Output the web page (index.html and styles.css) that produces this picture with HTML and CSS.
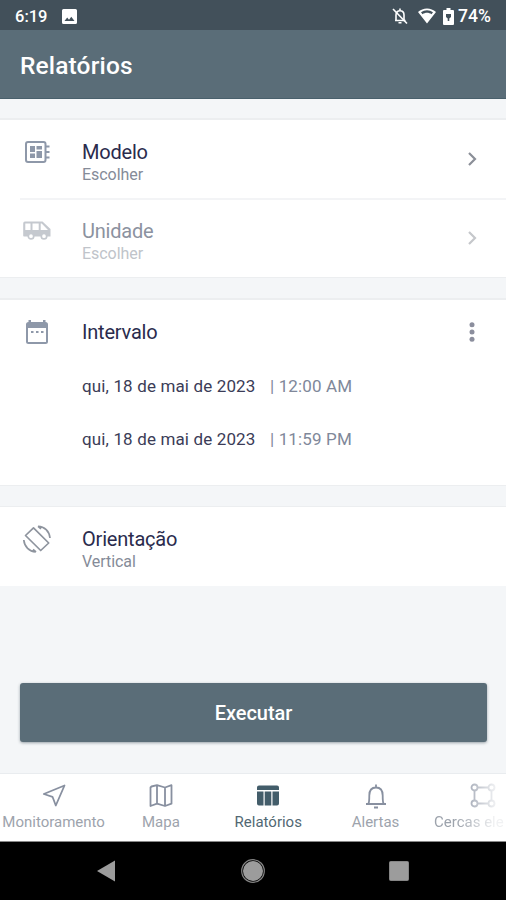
FILE: index.html
```html
<!DOCTYPE html>
<html lang="pt-BR">
<head>
<meta charset="utf-8">
<title>Relatórios</title>
<link rel="stylesheet" href="styles.css">
</head>
<body>
<div class="app">
  <div class="status">
    <span class="clock">6:19</span>
    <svg class="photo" width="15" height="15" viewBox="0 0 15 15"><path fill="#fff" fill-rule="evenodd" d="M1.500 0h12A1.500 1.500 0 0 1 15 1.500v12a1.500 1.500 0 0 1-1.500 1.500h-12A1.500 1.500 0 0 1 0 13.500v-12A1.500 1.500 0 0 1 1.500 0zM2.500 12h10L9.300 7.800 7 10.700 5.200 8.600z"/></svg>
    <svg class="mute" width="18" height="18" viewBox="0 0 18 18" fill="none" stroke="#fff" stroke-width="1.600"><path d="M4 13.500h10.500M5 13V8c0-2.600 1.600-4.300 4-4.300s4 1.700 4 4.300v5M9 1.500v2M7.500 15.800h3"/><path d="M2 2l14 14.500"/></svg>
    <svg class="wifi" width="18" height="16" viewBox="0 0 18 16"><path fill="#fff" fill-rule="evenodd" d="M0 4C5-.8 13-.8 18 4L9 15.500zM3 4.300l1.500 1.900c2.700-2 6.300-2 9 0L15 4.300c-3.600-2.700-8.400-2.700-12 0z"/></svg>
    <svg class="battery" width="11" height="17" viewBox="0 0 11 17"><path fill="#fff" d="M3.500 0h4v2H10a1 1 0 0 1 1 1v13a1 1 0 0 1-1 1H1a1 1 0 0 1-1-1V3a1 1 0 0 1 1-1h2.500z"/><path fill="#42505a" d="M3 6h5v3L6.300 10.500V13H4.700v-2.500L3 9z"/></svg>
    <span class="percent">74%</span>
  </div>
  <header class="bar"><h1>Relatórios</h1></header>
  <main class="content">
    <section class="card">
      <div class="row model">
        <svg class="icon" width="30" height="30" viewBox="0 0 30 30"><rect x="4" y="5" width="19.500" height="20" rx="2" fill="none" stroke="#8e98a9" stroke-width="2"/><path fill="#8e98a9" d="M8 9h5v6H8zM14.500 9H20v3.500h-5.500zM14.500 14H20v7h-5.500zM8 16.500h5V21H8zM24 8.500h3.500v2H24zM24 14h3.500v2H24zM24 19.500h3.500v2H24z"/></svg>
        <div class="text"><div class="label">Modelo</div><div class="sub">Escolher</div></div>
        <svg class="chevron" width="12" height="16" viewBox="0 0 12 16"><path d="M3 2l6 6-6 6"/></svg>
      </div>
      <hr>
      <div class="row unit">
        <svg class="icon" width="30" height="30" viewBox="0 0 30 30"><path fill="#c5c9cf" fill-rule="evenodd" d="M3.500 5.500H20.500l8 7.500v7.500h-26.500a.8.8 0 0 1-.8-.8V7.500a2 2 0 0 1 2.300-2zM3.300 7.500V14h5.200V7.500zM10.500 7.500V14h6.200V7.500zM18.700 7.500V14h7.300l-6.300-6.500z"/><circle cx="9" cy="20.200" r="2.700" fill="#fff" stroke="#c5c9cf" stroke-width="1.700"/><circle cx="22" cy="20.200" r="2.700" fill="#fff" stroke="#c5c9cf" stroke-width="1.700"/></svg>
        <div class="text"><div class="label">Unidade</div><div class="sub">Escolher</div></div>
        <svg class="chevron" width="12" height="16" viewBox="0 0 12 16"><path d="M3 2l6 6-6 6"/></svg>
      </div>
    </section>
    <section class="card interval">
      <div class="row heading">
        <svg class="icon" width="30" height="30" viewBox="0 0 30 30"><path fill="#8e98a9" fill-rule="evenodd" d="M6.500 3H9v2h12V3h2.500v2A2.500 2.500 0 0 1 26 7.500v17a2.500 2.500 0 0 1-2.500 2.500h-17A2.500 2.500 0 0 1 4 24.500v-17A2.500 2.500 0 0 1 6.500 5zM6 11v14h18V11z"/><path fill="#8e98a9" d="M9 14h2.500v2H9zM14 14h2.500v2H14zM19 14h2.500v2H19z"/></svg>
        <div class="text"><div class="label">Intervalo</div></div>
        <svg class="more" width="12" height="22" viewBox="0 0 12 22" fill="#8b8e9d"><circle cx="6" cy="3.700" r="2.500"/><circle cx="6" cy="11" r="2.500"/><circle cx="6" cy="18.300" r="2.500"/></svg>
      </div>
      <div class="date"><span class="day">qui, 18 de mai de 2023</span><span class="time">| 12:00 AM</span></div>
      <div class="date"><span class="day">qui, 18 de mai de 2023</span><span class="time">| 11:59 PM</span></div>
    </section>
    <section class="card orientation">
      <div class="row">
        <svg class="icon" width="30" height="30" viewBox="0 0 30 30" fill="none" stroke="#8e949e" stroke-width="1.700"><path stroke-linejoin="round" d="M11.500 3.800L26.700 19l-8 7.500L3.500 11.500z"/><path d="M16 2.300c6.500.2 11.300 5 12 11.700M1.800 16c.6 6.700 5.500 11.500 12 12M16 2.300l3 2.500M14 28l-3-2.500"/></svg>
        <div class="text"><div class="label">Orientação</div><div class="sub">Vertical</div></div>
      </div>
    </section>
    <button class="run">Executar</button>
  </main>
  <nav class="tabs">
    <div class="tab">
      <svg width="26" height="26" viewBox="0 0 26 26"><path d="M23.500 2.500L14.800 22.500l-3.300-8.700L2.800 11z"/></svg>
      <span class="wide">Monitoramento</span>
    </div>
    <div class="tab">
      <svg width="26" height="26" viewBox="0 0 26 26"><path d="M2.500 4.500l1-1 5.500-1.300 8 2.300 6.500-2.300v18.500l-6.500 2.300-8-2.300-6.500 2.300zM9 2.200v18.500M17 4.500V23"/></svg>
      <span>Mapa</span>
    </div>
    <div class="tab active">
      <svg width="26" height="26" viewBox="0 0 26 26"><path d="M4 2.500h18a2 2 0 0 1 2 2V7H2V4.500a2 2 0 0 1 2-2zM2 8.500h6.500v14H4a2 2 0 0 1-2-2zM9.700 8.500h6.600v14H9.700zM17.500 8.500H24v12a2 2 0 0 1-2 2h-4.500z"/></svg>
      <span>Relatórios</span>
    </div>
    <div class="tab">
      <svg width="26" height="26" viewBox="0 0 26 26"><path d="M3 21h20M5.500 20.500c.8-1.500.8-3 .8-8 0-5 2.300-8 6.700-8s6.700 3 6.700 8c0 5 0 6.500.8 8M13 1.500v3M11 24.500h4"/></svg>
      <span>Alertas</span>
    </div>
    <div class="tab last">
      <svg width="26" height="26" viewBox="0 0 26 26"><circle cx="4.500" cy="4.500" r="3"/><circle cx="21.500" cy="4.500" r="3"/><circle cx="4.500" cy="20.500" r="3"/><circle cx="21.500" cy="20.500" r="3"/><path d="M7.500 4.500h11M7.500 20.500h11M4.500 7.500v10M21.500 7.500v10"/></svg>
      <span>Cercas ele</span>
    </div>
  </nav>
  <div class="system">
    <svg width="20" height="24" viewBox="0 0 20 24"><path fill="#9c9c9c" d="M19 1.500v21L1 12z"/></svg>
    <svg width="26" height="26" viewBox="0 0 26 26"><circle cx="13" cy="13" r="10" fill="#9c9c9c"/><circle cx="13" cy="13" r="11.300" fill="none" stroke="#858585" stroke-width="1.200"/></svg>
    <svg width="20" height="20" viewBox="0 0 20 20"><rect x=".5" y=".5" width="19" height="19" rx="1" fill="#9c9c9c" stroke="#858585"/></svg>
  </div>
</div>
</body>
</html>
```
FILE: styles.css
```css
* { box-sizing: border-box; }
body { margin: 0; font-family: Roboto, sans-serif; background: #f4f6f8; }
svg { display: block; flex: none; }
.app { width: 506px; height: 900px; display: flex; flex-direction: column; overflow: hidden; }

.status { height: 30px; flex: none; display: flex; align-items: center; padding: 2px 14px 0 15px; background: #42505a; color: #fff; font-size: 17.500px; font-weight: 500; }
.clock { width: 32px; white-space: nowrap; font-size: 16.500px; }
.photo { margin-left: 15px; }
.mute { margin-left: auto; }
.wifi { margin-left: 9px; }
.battery { margin: 0 4px 0 7px; }
.percent { width: 34px; white-space: nowrap; }

.bar { height: 69px; flex: none; display: flex; align-items: center; padding: 3px 20px 0; background: #5a6d78; border-bottom: 1px solid #49606c; color: #fff; }
h1 { margin: 0; font-size: 24.500px; font-weight: 500; line-height: 30px; letter-spacing: .15px; }

.content { flex: 1; display: flex; flex-direction: column; padding-top: 19px; }
.card { background: #fff; border-top: 2px solid #eceef0; border-bottom: 1px solid #eceef0; margin-bottom: 20px; flex: none; }
.row { display: flex; align-items: flex-start; padding: 0 28px 0 22px; }
.model { height: 78px; }
.unit { height: 77px; }
.icon { margin-top: 17px; }
.unit .icon { margin-top: 16px; }
.text { flex: 1; margin-left: 30px; padding-top: 20px; }
.unit .text { padding-top: 19px; }
.label { font-size: 20px; line-height: 25px; color: #2a2b4d; letter-spacing: -.2px; }
.sub { font-size: 16px; line-height: 19px; color: #858b98; letter-spacing: -.05px; }
.unit .label { color: #8c92a0; }
.unit .sub { color: #c0c4ca; }
.chevron { margin-top: 31px; fill: none; stroke: #8b8f98; stroke-width: 2.200; }
.unit .chevron { margin-top: 30px; stroke: #c5c7cb; }
hr { margin: 0 0 0 20px; border: 0; height: 2px; background: #f3f4f6; }

.interval { height: 188px; }
.heading { height: 59px; }
.more { margin-top: 21px; }
.date { height: 53.500px; padding-left: 82px; display: flex; align-items: center; font-size: 17px; color: #3b3c57; }
.day { width: 188px; white-space: nowrap; letter-spacing: .14px; }
.time { color: #80889a; white-space: nowrap; letter-spacing: .14px; }
.orientation { height: 80px; margin-bottom: 0; border-top-width: 1px; border-bottom: 0; }

.run { height: 59px; margin: auto 19px 31px 20px; padding: 1px 0 0; border: 0; border-radius: 3px; background: #5a6d78; color: #fff; font: 500 20px/24px Roboto, sans-serif; letter-spacing: -.05px; box-shadow: 0 1px 3px rgba(40, 60, 72, .45); }

.tabs { height: 69px; flex: none; display: flex; background: #fff; border-top: 1px solid #e9ecef; border-bottom: 1px solid #888; overflow: hidden; }
.tab { width: 107.300px; flex: none; display: flex; flex-direction: column; align-items: center; padding-top: 9px; color: #9da3ac; font-size: 15px; line-height: 20px; white-space: nowrap; }
.tab svg { fill: none; stroke: #8890a0; stroke-width: 1.800; stroke-linejoin: round; }
.tab span { margin-top: 3px; }
.tab.active { color: #526873; }
.tab.active svg { fill: #435d6a; stroke: none; }
.last { width: 77px; align-items: flex-start; padding-left: 5px; margin-left: -.2px; -webkit-mask-image: linear-gradient(to right, #000 35%, rgba(0, 0, 0, .15) 85%); mask-image: linear-gradient(to right, #000 35%, rgba(0, 0, 0, .15) 85%); }
.last svg { margin-left: 36px; }

.system { height: 58px; flex: none; display: flex; align-items: center; justify-content: space-between; padding: 0 97px 0 96px; background: #000; }
```
